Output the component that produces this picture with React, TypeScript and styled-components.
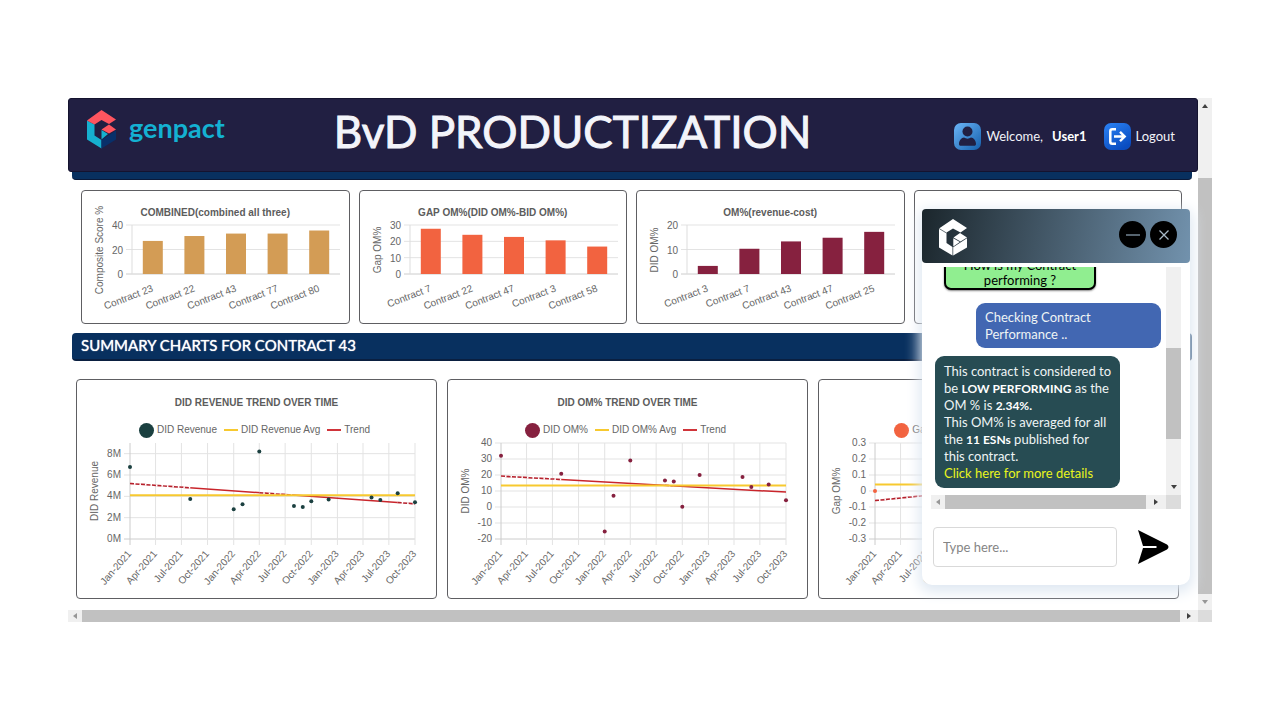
import React from 'react';
import styled, { createGlobalStyle } from 'styled-components';

const GlobalStyle = createGlobalStyle`
  * { box-sizing: border-box; }
  body { margin: 0; background: #fff; font-family: Lato, "Liberation Sans", sans-serif; }
  button { border: 0; padding: 0; background: none; font: inherit; color: inherit; cursor: pointer; }
`;

const Page = styled.div`
  padding: 98px 68px;
`;

const Frame = styled.div`
  position: relative;
  display: grid;
  grid-template-columns: minmax(0, 1fr) 14px;
  grid-template-rows: 512px 12px;
`;

const Content = styled.main`
  overflow: hidden;
`;

const Header = styled.header`
  display: flex;
  align-items: flex-start;
  justify-content: space-between;
  height: 74px;
  padding: 0 22px 0 18px;
  background: #211f42;
  border: 1px solid #14132f;
  border-radius: 3px;
`;

const Brand = styled.a`
  display: flex;
  align-items: center;
  gap: 12px;
  margin-top: 11px;
  color: #14b1d2;
  font: 700 27px/34px Lato, sans-serif;
  text-decoration: none;
  span { padding-bottom: 4px; }
`;

const PageTitle = styled.h1`
  margin: 0;
  padding-right: 34px;
  color: #f3f4fa;
  font: 400 44px/64px Lato, sans-serif;
  -webkit-text-stroke: 1px #f3f4fa;
`;

const UserArea = styled.nav`
  display: flex;
  align-items: center;
  gap: 17px;
  margin-top: 23px;
  color: #f1f2f8;
  font-size: 13px;
  line-height: 28px;
`;

const UserItem = styled.div`
  display: flex;
  align-items: center;
  gap: 5px;
  b { margin-left: 4px; color: #fff; }
`;

const LogoutButton = styled.button`
  display: flex;
  align-items: center;
  gap: 5px;
`;

const Strip = styled.div`
  height: 8px;
  margin: 0 6px 0 4px;
  background: #08305f;
  border-bottom: 1px solid #0a1938;
  border-radius: 0 0 4px 4px;
`;

const CardRow = styled.section<{ $columns: number; $pad: string; $gap: number }>`
  display: grid;
  grid-template-columns: repeat(${p => p.$columns}, minmax(0, 1fr));
  gap: ${p => p.$gap}px;
  padding: ${p => p.$pad};
`;

const Card = styled.article<{ $height: number; $top: number }>`
  height: ${p => p.$height}px;
  padding-top: ${p => p.$top}px;
  background: #fff;
  border: 1px solid #5e5e62;
  border-radius: 4px;
  overflow: hidden;
`;

const CardTitle = styled.h3`
  margin: 0;
  color: #5c5c5c;
  text-align: center;
  font: 700 10px/14px "Liberation Sans", Arial, sans-serif;
  white-space: nowrap;
`;

const Legend = styled.div`
  display: flex;
  align-items: center;
  justify-content: center;
  gap: 7px;
  height: 16px;
  margin: 12px 0 1px;
  padding-right: 4px;
  color: #666;
  font: 10px/16px "Liberation Sans", Arial, sans-serif;
  white-space: nowrap;
`;

const LegendItem = styled.span`
  display: flex;
  align-items: center;
  gap: 3px;
`;

const Dot = styled.i<{ $color: string }>`
  width: 15px;
  height: 15px;
  border-radius: 50%;
  background: ${p => p.$color};
`;

const Dash = styled.i<{ $color: string }>`
  width: 14px;
  height: 2px;
  background: ${p => p.$color};
`;

const Plot = styled.svg`
  display: block;
  width: 100%;
  overflow: visible;
  font: 10px "Liberation Sans", Arial, sans-serif;
  fill: #666;
`;

const SectionBar = styled.h2`
  height: 28px;
  margin: 9px 6px 0 4px;
  padding: 0 9px;
  background: #08305f;
  border-bottom: 2px solid #0a1f40;
  border-radius: 4px;
  color: #fff;
  font: 400 15px/24px Lato, sans-serif;
  text-shadow: 0 0 1px #fff;
`;

const Track = styled.div<{ $vertical?: boolean }>`
  display: flex;
  flex-direction: ${p => (p.$vertical ? 'column' : 'row')};
  align-items: stretch;
  background: #f0f0f0;
  min-width: 0;
`;

const ArrowBox = styled.span<{ $size: number }>`
  display: flex;
  align-items: center;
  justify-content: center;
  flex: 0 0 ${p => p.$size}px;
`;

const Space = styled.span<{ $size: number }>`
  flex: 0 0 ${p => p.$size}px;
`;

const Thumb = styled.span`
  flex: 1;
  background: #c1c1c1;
`;

const Corner = styled.div`
  background: #dcdcdc;
`;

const Chat = styled.aside`
  position: absolute;
  right: 22px;
  bottom: 37px;
  width: 268px;
  background: #fff;
  border-radius: 4px 4px 10px 10px;
  box-shadow: 0 4px 14px 3px #dfe8f2;
`;

const ChatHeader = styled.div`
  display: flex;
  align-items: flex-start;
  gap: 4px;
  height: 54px;
  padding: 10px 13px 0 17px;
  border-radius: 4px;
  background: linear-gradient(100deg, #1b262c, #7292ad);
  svg { display: block; }
`;

const ChatActions = styled.div`
  display: flex;
  gap: 4px;
  margin-left: auto;
  padding-top: 2px;
`;

const RoundButton = styled.button`
  display: flex;
  align-items: center;
  justify-content: center;
  width: 27px;
  height: 27px;
  border-radius: 50%;
  background: #000;
`;

const ChatScroll = styled.div`
  display: grid;
  grid-template-columns: minmax(0, 1fr) 15px;
  grid-template-rows: 228px 14px;
  margin: 4px 9px 0;
`;

const Messages = styled.div`
  display: flex;
  flex-direction: column;
  justify-content: flex-end;
  gap: 8px;
  padding: 0 5px 7px 4px;
  overflow: hidden;
`;

const Bubble = styled.div<{ $side: 'left' | 'right' }>`
  flex: none;
  align-self: ${p => (p.$side === 'left' ? 'flex-start' : 'flex-end')};
  width: 185px;
  padding: ${p => (p.$side === 'left' ? '7px 0 6px 9px' : '6px 9px 5px')};
  border-radius: 9px;
  background: ${p => (p.$side === 'left' ? '#274c53' : '#4267b2')};
  color: #eef4f5;
  font-size: 13px;
  line-height: 17px;
  white-space: nowrap;
  b { color: #fff; font-size: 12px; line-height: 1; }
  a { color: #e9f51d; text-decoration: none; }
`;

const Prompt = styled.button`
  flex: none;
  align-self: flex-start;
  width: 152px;
  margin: 0 0 5px 9px;
  padding: 3px 0 0;
  border: 2px solid #000;
  border-radius: 7px;
  background: #90ee90;
  color: #000;
  font-size: 13px;
  line-height: 15px;
  box-shadow: 0 1px 2px #888;
`;

const Composer = styled.form`
  display: flex;
  align-items: center;
  gap: 19px;
  padding: 18px 20px 18px 11px;
`;

const TextBox = styled.input`
  flex: 1;
  min-width: 0;
  height: 40px;
  padding: 0 9px;
  border: 1px solid #d9d9d9;
  border-radius: 4px;
  background: #fff;
  font: 13px Lato, sans-serif;
  &::placeholder { color: #858585; opacity: 1; }
`;

const SendButton = styled.button`
  display: flex;
  width: 34px;
  height: 36px;
`;

type Dir = 'up' | 'down' | 'left' | 'right';
const ARROWS: Record<Dir, string> = {
  up: '1,6 4,2 7,6',
  down: '1,2 4,6 7,2',
  left: '6,1 2,4 6,7',
  right: '2,1 6,4 2,7',
};

function Arrow({ dir, faded, size = 14 }: { dir: Dir; faded?: boolean; size?: number }) {
  return (
    <ArrowBox $size={size}>
      <svg width="8" height="8" viewBox="0 0 8 8" aria-hidden="true">
        <polygon points={ARROWS[dir]} fill={faded ? '#979797' : '#404040'} />
      </svg>
    </ArrowBox>
  );
}

function ColorMark() {
  return (
    <svg width="30" height="39" viewBox="0 0 30 39" aria-hidden="true">
      <path d="M0 10.500V29.500L14.500 38.500V30L7.500 25.500V14.500Z" fill="#16b0cf" />
      <path d="M0 10.500L14.500 0L29 9.500L22 14L14.500 10L7.500 14.500Z" fill="#ff555f" />
      <path d="M22 14.500L29 19.500L22 23.500L14.500 19.500Z" fill="#ff555f" />
      <path d="M14.500 20L21 24L14.500 29.500Z" fill="#16b0cf" />
      <path d="M29 20.500V29.500L14.500 38.500V30Z" fill="#08306a" />
    </svg>
  );
}

function WhiteMark() {
  return (
    <svg width="29" height="37" viewBox="0 0 29 37" aria-hidden="true">
      <path d="M0 9.500L14 0L28 9L21.500 13.500L14 9.500L7.500 13.500V24L13.500 28V36.500L0 28.500Z" fill="#fff" />
      <path d="M0 9.500L7.500 14" stroke="#26333b" strokeWidth="0.700" />
      <path d="M21 14L28 18.500L21.500 22.500L14.500 18.500Z M14.300 19.300L20.800 23L14.300 27.400Z M28 19.300V28.500L14.200 36.500V28.200Z" fill="#fff" />
    </svg>
  );
}

function UserIcon() {
  return (
    <svg width="27" height="27" viewBox="0 0 27 27" aria-hidden="true">
      <defs>
        <linearGradient id="userTile" x1="0" y1="0" x2="1" y2="1">
          <stop offset="0" stopColor="#6bb5f7" />
          <stop offset="1" stopColor="#155fac" />
        </linearGradient>
      </defs>
      <rect width="27" height="27" rx="7" fill="url(#userTile)" />
      <circle cx="13.500" cy="8.500" r="5" fill="#211f42" />
      <path d="M5 21C5 17.500 7.500 14.500 10 14.500C12 16 15 16 17 14.500C19.500 14.500 22 17.500 22 21C22 22 21.300 22.800 20.300 22.800H6.700C5.700 22.800 5 22 5 21Z" fill="#211f42" />
    </svg>
  );
}

function LogoutIcon() {
  return (
    <svg width="27" height="27" viewBox="0 0 27 27" aria-hidden="true">
      <defs>
        <linearGradient id="outTile" x1="0" y1="0" x2="0.600" y2="1">
          <stop offset="0" stopColor="#2b83f6" />
          <stop offset="1" stopColor="#0a4cc0" />
        </linearGradient>
      </defs>
      <rect width="27" height="27" rx="7" fill="url(#outTile)" />
      <path d="M12 6.300H8.300Q6.300 6.300 6.300 8.300V18.700Q6.300 20.700 8.300 20.700H12" fill="none" stroke="#fff" strokeWidth="2.500" />
      <path d="M10 13.500H20M16 8.800L20.700 13.500L16 18.200" fill="none" stroke="#fff" strokeWidth="2.400" />
    </svg>
  );
}

interface BarData {
  title: string;
  axis: string;
  color: string;
  max: number;
  step: number;
  bars: [string, number][];
}

const BAR_CHARTS: BarData[] = [
  {
    title: 'COMBINED(combined all three)', axis: 'Composite Score %', color: '#d39c55', max: 40, step: 20,
    bars: [['Contract 23', 27], ['Contract 22', 31], ['Contract 43', 33], ['Contract 77', 33], ['Contract 80', 35.5]],
  },
  {
    title: 'GAP OM%(DID OM%-BID OM%)', axis: 'Gap OM%', color: '#f26340', max: 30, step: 10,
    bars: [['Contract 7', 27.7], ['Contract 22', 24], ['Contract 47', 22.7], ['Contract 3', 20.6], ['Contract 58', 16.8]],
  },
  {
    title: 'OM%(revenue-cost)', axis: 'DID OM%', color: '#86213f', max: 20, step: 10,
    bars: [['Contract 3', 3.3], ['Contract 7', 10.3], ['Contract 43', 13.3], ['Contract 47', 14.8], ['Contract 25', 17.2]],
  },
];

function range(from: number, to: number, step: number) {
  const count = Math.round((to - from) / step);
  return Array.from({ length: count + 1 }, (_, i) => from + i * step);
}

function BarChart({ data }: { data: BarData }) {
  const left = 50;
  const right = 258;
  const top = 5;
  const bottom = 54;
  const slot = (right - left) / data.bars.length;
  const y = (v: number) => bottom - (v / data.max) * (bottom - top);
  return (
    <Plot height="103" viewBox="0 0 266 103" preserveAspectRatio="xMinYMin meet" role="img" aria-label={data.title}>
      {range(0, data.max, data.step).map(v => (
        <g key={v}>
          <line x1={left - 6} x2={right} y1={y(v)} y2={y(v)} stroke={v ? '#e3e3e3' : '#cccccc'} />
          <text x={left - 9} y={y(v) + 4} textAnchor="end">{v}</text>
        </g>
      ))}
      <line x1={left} x2={left} y1={top} y2={bottom} stroke="#dddddd" />
      <text transform="translate(21 30) rotate(-90)" textAnchor="middle">{data.axis}</text>
      {data.bars.map(([name, value], i) => {
        const cx = left + slot * (i + 0.5);
        return (
          <g key={name}>
            <rect x={cx - 10} y={y(value)} width="20" height={bottom - y(value)} fill={data.color} />
            <text transform={`translate(${cx + 1} 71) rotate(-21)`} textAnchor="end">{name}</text>
          </g>
        );
      })}
    </Plot>
  );
}

interface TrendData {
  title: string;
  axis: string;
  name: string;
  color: string;
  left: number;
  min: number;
  max: number;
  ticks: number[];
  unit?: string;
  avg: number;
  trend: [number, number];
  dashed: [string, string][];
  points: [string, number][];
}

const TREND_CHARTS: TrendData[] = [
  {
    title: 'DID REVENUE TREND OVER TIME', axis: 'DID Revenue', name: 'DID Revenue', color: '#1b4040',
    left: 53, min: 0, max: 9, ticks: [0, 2, 4, 6, 8], unit: 'M', avg: 4.1, trend: [5.2, 3.3],
    dashed: [['2021-01', '2021-08'], ['2022-04', '2022-08'], ['2023-08', '2023-10']],
    points: [['2021-01', 6.75], ['2021-08', 3.75], ['2022-01', 2.8], ['2022-02', 3.25], ['2022-04', 8.2], ['2022-08', 3.1], ['2022-09', 3], ['2022-10', 3.55], ['2022-12', 3.7], ['2023-05', 3.9], ['2023-06', 3.65], ['2023-08', 4.3], ['2023-10', 3.45]],
  },
  {
    title: 'DID OM% TREND OVER TIME', axis: 'DID OM%', name: 'DID OM%', color: '#86213f',
    left: 53, min: -20, max: 40, ticks: range(-20, 40, 10), avg: 13.5, trend: [19.3, 9.3],
    dashed: [['2021-01', '2021-08'], ['2022-08', '2022-09']],
    points: [['2021-01', 32], ['2021-08', 20.8], ['2022-01', -15.3], ['2022-02', 7], ['2022-04', 29], ['2022-08', 16.5], ['2022-09', 16], ['2022-10', 0.2], ['2022-12', 20], ['2023-05', 18.8], ['2023-06', 12.5], ['2023-08', 14], ['2023-10', 4.2]],
  },
  {
    title: '', axis: 'Gap OM%', name: 'Gap OM%', color: '#f26340',
    left: 56, min: -0.3, max: 0.3, ticks: [-0.3, -0.2, -0.1, 0, 0.1, 0.2, 0.3], avg: 0.04, trend: [-0.06, 0.12],
    dashed: [['2021-01', '2021-08']],
    points: [['2021-01', 0]],
  },
];

const MONTHS = ['Jan-2021', 'Apr-2021', 'Jul-2021', 'Oct-2021', 'Jan-2022', 'Apr-2022', 'Jul-2022', 'Oct-2022', 'Jan-2023', 'Apr-2023', 'Jul-2023', 'Oct-2023'];
const START = Date.UTC(2021, 0, 1);
const SPAN = Date.UTC(2023, 9, 1) - START;

function fraction(month: string) {
  const [year, m] = month.split('-').map(Number);
  return (Date.UTC(year, m - 1, 1) - START) / SPAN;
}

function TrendChart({ data }: { data: TrendData }) {
  const width = 285;
  const top = 4;
  const bottom = 100;
  const right = data.left + width;
  const x = (f: number) => data.left + f * width;
  const y = (v: number) => bottom - ((v - data.min) / (data.max - data.min)) * (bottom - top);
  const trendY = (f: number) => y(data.trend[0] + (data.trend[1] - data.trend[0]) * f);
  return (
    <Plot height="160" viewBox="0 0 359 160" preserveAspectRatio="xMinYMin meet" role="img" aria-label={data.axis + ' over time'}>
      {data.ticks.map(v => (
        <g key={v}>
          <line x1={data.left - 6} x2={right} y1={y(v)} y2={y(v)} stroke={v === data.min ? '#cccccc' : '#e3e3e3'} />
          <text x={data.left - 9} y={y(v) + 3} textAnchor="end">{v}{data.unit}</text>
        </g>
      ))}
      {MONTHS.map((label, i) => {
        const px = x(fraction(`${2021 + Math.floor(i / 4)}-${(i % 4) * 3 + 1}`));
        return (
          <g key={label}>
            <line x1={px} x2={px} y1={top} y2={bottom + 6} stroke={i ? '#e3e3e3' : '#cccccc'} />
            <text transform={`translate(${px + 2} 115) rotate(-49)`} textAnchor="end">{label}</text>
          </g>
        );
      })}
      <text transform={`translate(21 ${(top + bottom) / 2}) rotate(-90)`} textAnchor="middle">{data.axis}</text>
      <line x1={x(0)} x2={right} y1={trendY(0)} y2={trendY(1)} stroke="#c9252b" strokeWidth="1.500" />
      {data.dashed.map(([from, to]) => {
        const [a, b] = [fraction(from), fraction(to)];
        return (
          <g key={from}>
            <line x1={x(a)} x2={x(b)} y1={trendY(a)} y2={trendY(b)} stroke="#ffffff" strokeWidth="2" />
            <line x1={x(a)} x2={x(b)} y1={trendY(a)} y2={trendY(b)} stroke="#b5202c" strokeWidth="1.500" strokeDasharray="4 1.500" />
          </g>
        );
      })}
      <line x1={x(0)} x2={right} y1={y(data.avg)} y2={y(data.avg)} stroke="#f7c92f" strokeWidth="2" />
      {data.points.map(([month, value]) => (
        <circle key={month} cx={x(fraction(month))} cy={y(value)} r="2" fill={data.color} />
      ))}
    </Plot>
  );
}

export default function App() {
  return (
    <Page>
      <GlobalStyle />
      <Frame>
        <Content>
          <Header>
            <Brand href="#home"><ColorMark /><span>genpact</span></Brand>
            <PageTitle>BvD PRODUCTIZATION</PageTitle>
            <UserArea>
              <UserItem><UserIcon />Welcome, <b>User1</b></UserItem>
              <LogoutButton type="button"><LogoutIcon />Logout</LogoutButton>
            </UserArea>
          </Header>
          <Strip />
          <CardRow $columns={4} $gap={9} $pad="10px 16px 0 13px">
            {BAR_CHARTS.map(chart => (
              <Card key={chart.title} $height={134} $top={15}>
                <CardTitle>{chart.title}</CardTitle>
                <BarChart data={chart} />
              </Card>
            ))}
            <Card $height={134} $top={15} />
          </CardRow>
          <SectionBar>SUMMARY CHARTS FOR CONTRACT 43</SectionBar>
          <CardRow $columns={3} $gap={10} $pad="18px 19px 0 8px">
            {TREND_CHARTS.map(chart => (
              <Card key={chart.axis} $height={220} $top={16}>
                <CardTitle>{chart.title || '\u00a0'}</CardTitle>
                <Legend>
                  <LegendItem><Dot $color={chart.color} />{chart.name}</LegendItem>
                  <LegendItem><Dash $color="#f7c92f" />{chart.name} Avg</LegendItem>
                  <LegendItem><Dash $color="#d0343a" />Trend</LegendItem>
                </Legend>
                <TrendChart data={chart} />
              </Card>
            ))}
          </CardRow>
        </Content>
        <Track $vertical>
          <Arrow dir="up" size={16} />
          <Space $size={64} />
          <Thumb />
          <Arrow dir="down" faded size={16} />
        </Track>
        <Track>
          <Arrow dir="left" faded />
          <Thumb />
          <Arrow dir="right" size={18} />
        </Track>
        <Corner />

        <Chat>
          <ChatHeader>
            <WhiteMark />
            <ChatActions>
              <RoundButton type="button" aria-label="Minimize">
                <svg width="16" height="16" viewBox="0 0 16 16"><path d="M1 8H15" stroke="#8fa5b8" strokeWidth="1.200" /></svg>
              </RoundButton>
              <RoundButton type="button" aria-label="Close">
                <svg width="10" height="10" viewBox="0 0 10 10"><path d="M0.500 0.500L9.500 9.500M9.500 0.500L0.500 9.500" stroke="#a9bac8" strokeWidth="1.300" /></svg>
              </RoundButton>
            </ChatActions>
          </ChatHeader>
          <ChatScroll>
            <Messages>
              <Prompt type="button">How is my Contract<br />performing ?</Prompt>
              <Bubble $side="right">Checking Contract<br />Performance ..</Bubble>
              <Bubble $side="left">
                This contract is considered to<br />
                be <b>LOW PERFORMING</b> as the<br />
                OM % is <b>2.34%.</b><br />
                This OM% is averaged for all<br />
                the <b>11 ESNs</b> published for<br />
                this contract.<br />
                <a href="#details">Click here for more details</a>
              </Bubble>
            </Messages>
            <Track $vertical>
              <Space $size={81} />
              <Thumb />
              <Space $size={40} />
              <Arrow dir="down" size={16} />
            </Track>
            <Track>
              <Arrow dir="left" faded />
              <Thumb />
              <Arrow dir="right" size={20} />
            </Track>
            <Corner />
          </ChatScroll>
          <Composer onSubmit={e => e.preventDefault()}>
            <TextBox type="text" placeholder="Type here..." aria-label="Message" />
            <SendButton type="submit" aria-label="Send">
              <svg width="34" height="36" viewBox="0 0 34 36">
                <path d="M2 1L31 15.500Q34 18 31 20.500L2 35L7 19H20.500V17H7Z" fill="#000" />
              </svg>
            </SendButton>
          </Composer>
        </Chat>
      </Frame>
    </Page>
  );
}
